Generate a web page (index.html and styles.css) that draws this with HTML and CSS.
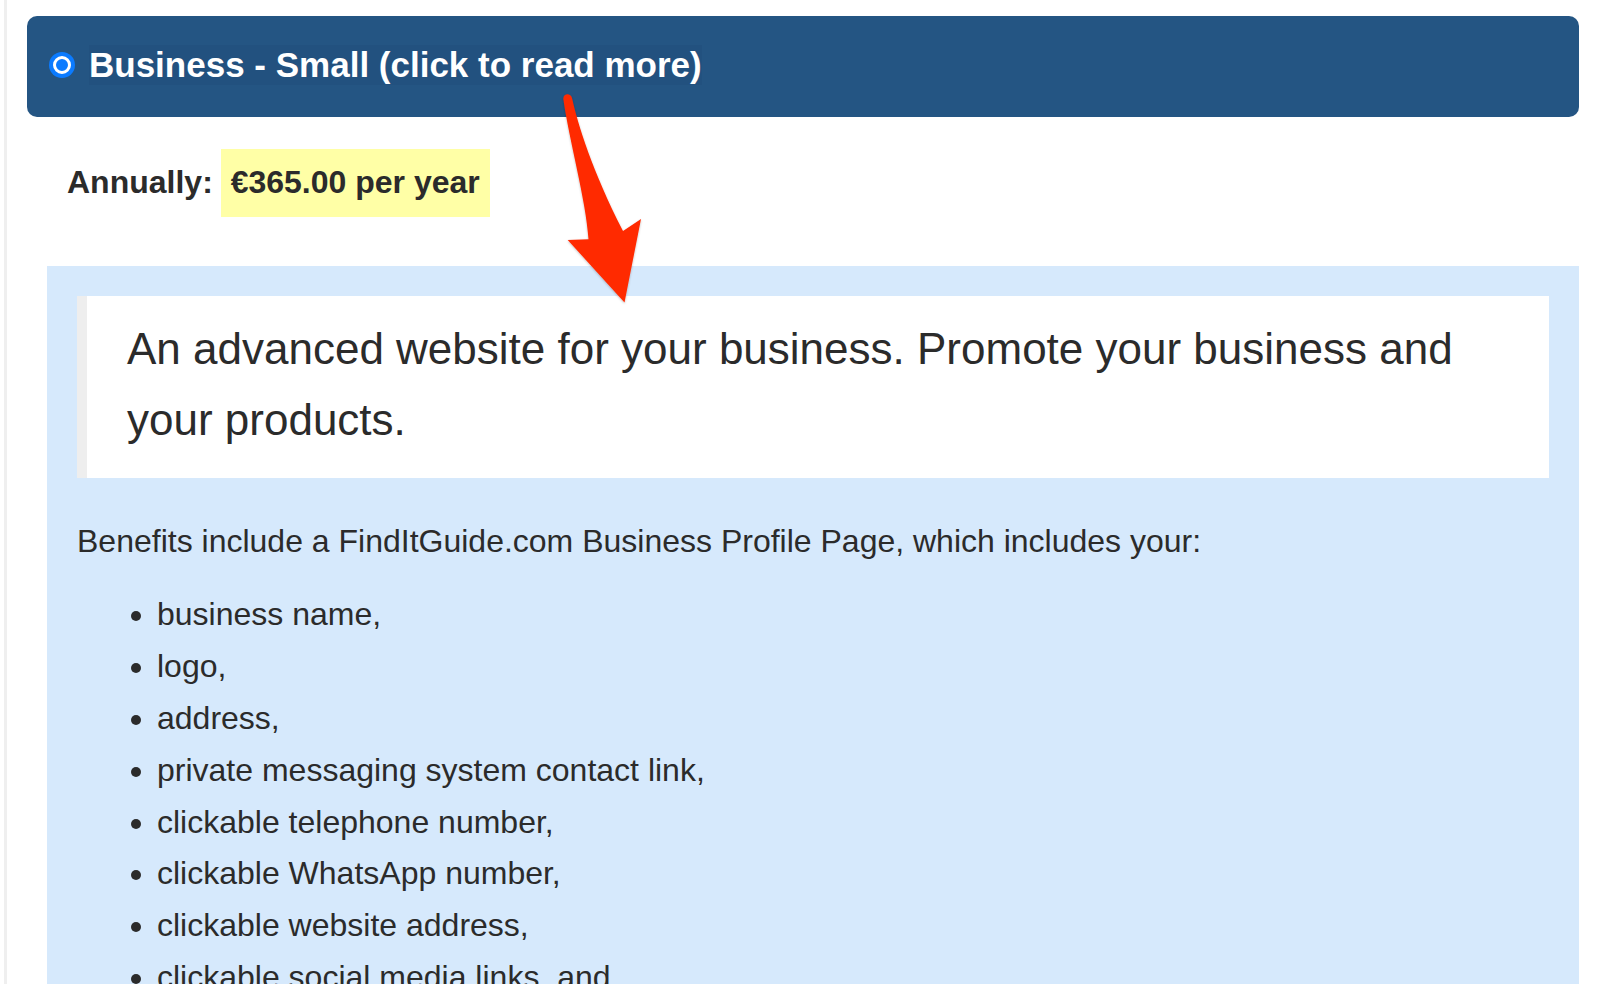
FILE: index.html
```html
<!DOCTYPE html>
<html lang="en">
<head>
<meta charset="utf-8">
<title>Business - Small</title>
<link rel="stylesheet" href="styles.css">
</head>
<body>
<div class="page">
  <div class="plan-header">
    <span class="radio"></span>
    <span class="plan-title">Business - Small (click to read more)</span>
  </div>

  <div class="price-row">
    <span class="price-label">Annually:</span>
    <span class="price-value">€365.00 per year</span>
  </div>

  <div class="panel">
    <blockquote class="lead">An advanced website for your business. Promote your business and your products.</blockquote>
    <p class="intro">Benefits include a FindItGuide.com Business Profile Page, which includes your:</p>
    <ul class="benefits">
      <li>business name,</li>
      <li>logo,</li>
      <li>address,</li>
      <li>private messaging system contact link,</li>
      <li>clickable telephone number,</li>
      <li>clickable WhatsApp number,</li>
      <li>clickable website address,</li>
      <li>clickable social media links, and</li>
    </ul>
  </div>

  <svg class="arrow" width="1598" height="984" viewBox="0 0 1598 984" aria-hidden="true">
    <defs>
      <filter id="shadow" x="-20%" y="-20%" width="140%" height="140%">
        <feDropShadow dx="0" dy="1" stdDeviation="1.2" flood-color="#000" flood-opacity="0.25"/>
      </filter>
    </defs>
    <path filter="url(#shadow)" fill="#ff2a00"
      d="M 563.5 100 C 562 93.5, 570.5 92, 572 98 C 578 125, 592 170, 623 231 L 641 219 L 624.5 302.5 L 567.7 240 L 588.5 239.3 C 586 200, 569 140, 563.5 100 Z"/>
  </svg>
</div>
</body>
</html>
```

FILE: styles.css
```css
html, body {
  margin: 0;
  padding: 0;
  background: #ffffff;
}

body {
  font-family: "Liberation Sans", Arial, Helvetica, sans-serif;
  color: #2b2b2b;
  font-size: 32px;
  line-height: 1.62;
  overflow: hidden;
}

.page {
  position: relative;
  margin-left: 4px;
  border-left: 3px solid #efefef;
  padding: 16px 19px 0 20px;
  min-height: 984px;
  box-sizing: border-box;
}

.plan-header {
  display: flex;
  align-items: center;
  gap: 14px;
  height: 101px;
  padding: 0 0 3px 22px;
  box-sizing: border-box;
  background: #245583;
  border-radius: 10px;
}

.radio {
  width: 26px;
  height: 26px;
  border-radius: 50%;
  background: #0b7bff;
  display: flex;
  align-items: center;
  justify-content: center;
  flex: none;
}

.radio::after {
  content: "";
  width: 12px;
  height: 12px;
  border: 3px solid #ffffff;
  border-radius: 50%;
  background: #0b7bff;
}

.plan-title {
  color: #ffffff;
  font-weight: bold;
  font-size: 35px;
  line-height: 40px;
  background: #22517f;
}

.price-row {
  margin: 32px 0 0 40px;
  font-weight: bold;
  font-size: 32px;
  line-height: 1.62;
}

.price-value {
  display: inline-block;
  background: #ffffa6;
  padding: 8px 10px;
  margin-left: -1px;
}

.panel {
  margin: 49px 0 0 20px;
  padding: 30px 30px 0 30px;
  background: #d6e9fc;
  min-height: 800px;
}

.lead {
  margin: 0 0 38px 0;
  background: #ffffff;
  border-left: 10px solid #eeeeee;
  padding: 17px 40px 23px 40px;
  font-size: 44px;
  line-height: 1.62;
}

.intro {
  margin: 0 0 21px 0;
}

.benefits {
  margin: 0;
  padding-left: 80px;
}

.benefits li {
  margin: 0;
}

.arrow {
  position: absolute;
  left: -7px;
  top: 0;
  pointer-events: none;
  overflow: visible;
}
```
